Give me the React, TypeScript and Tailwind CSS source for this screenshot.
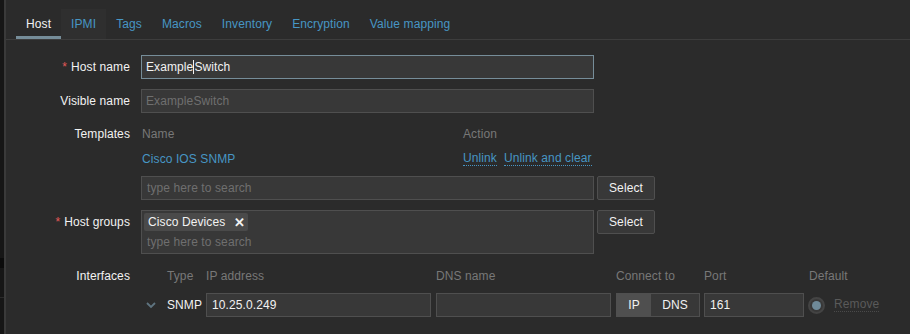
import React from 'react'

const tabs = ['Host', 'IPMI', 'Tags', 'Macros', 'Inventory', 'Encryption', 'Value mapping']

function Label({ text, required }: { text: string; required?: boolean }) {
    return (
        <div className="w-[124px] shrink-0 text-right text-[#f2f2f2] leading-[24px]">
            {required && <span className="text-[#e45959] mr-[4px]">*</span>}
            {text}
        </div>
    )
}

function SelectButton() {
    return (
        <div className="h-[24px] w-[58px] ml-[3px] bg-[#383838] border border-[#4f4f4f] rounded-[2px] text-[#f2f2f2] flex items-center justify-center">
            Select
        </div>
    )
}

export default function App() {
    return (
        <div className="w-[910px] h-[334px] bg-[#2b2b2b] flex overflow-hidden text-[12px] tracking-[0.1px] font-['Liberation_Sans',Arial,sans-serif]">
            <div className="w-[5px] shrink-0 bg-[#161616] border-r border-[#3a3a3a] flex flex-col">
                <div className="h-[258px]" />
                <div className="h-[10px] bg-[#0b0b0b]" />
                <div className="h-[29px]" />
                <div className="h-px bg-[#2a2a2a]" />
            </div>
            <div className="flex-1 border-l border-[#3a3a3a]">
                <div className="pt-[9px] pl-[10px] border-b border-[#3d3d3d] flex">
                    {tabs.map((t, i) => (
                        <div
                            key={t}
                            className={
                                i === 0
                                    ? 'h-[30px] px-[10px] flex items-center text-[#f2f2f2] border-b-[3px] border-[#768d99] pt-[3px]'
                                    : i === 1
                                    ? 'h-[30px] px-[10px] flex items-center text-[#4796c4] bg-[#2f2f2f] border-b-[3px] border-transparent pt-[3px]'
                                    : 'h-[30px] px-[10px] flex items-center text-[#4796c4] border-b-[3px] border-transparent pt-[3px]'
                            }
                        >
                            {t}
                        </div>
                    ))}
                </div>

                <div className="pt-[15px] flex flex-col">
                    <div className="flex">
                        <Label text="Host name" required />
                        <div className="ml-[11px] w-[453px] h-[24px] bg-[#383838] border border-[#768d99] flex items-center px-[4px] text-[#f2f2f2]">
                            Example<span className="inline-block w-px h-[14px] bg-[#f2f2f2]" />Switch
                        </div>
                    </div>

                    <div className="flex mt-[10px]">
                        <Label text="Visible name" />
                        <div className="ml-[11px] w-[453px] h-[24px] bg-[#383838] border border-[#4f4f4f] flex items-center px-[4px] text-[#6f6f6f]">
                            ExampleSwitch
                        </div>
                    </div>

                    <div className="flex mt-[10px]">
                        <div className="flex flex-col">
                            <div className="mt-[-1px]"><Label text="Templates" /></div>
                        </div>
                        <div className="ml-[11px] flex flex-col">
                            <div className="w-[453px] flex h-[22px] items-center text-[#787878]">
                                <div className="w-[322px] pl-px">Name</div>
                                <div>Action</div>
                            </div>
                            <div className="w-[453px] flex h-[24px] items-center pt-[3px]">
                                <div className="w-[322px] pl-px text-[#4796c4]">Cisco IOS SNMP</div>
                                <div className="flex gap-[7px]">
                                    <span className="text-[#4796c4] border-b border-dotted border-[#4796c4] leading-[13px]">Unlink</span>
                                    <span className="text-[#4796c4] border-b border-dotted border-[#4796c4] leading-[13px]">Unlink and clear</span>
                                </div>
                            </div>
                            <div className="flex mt-[7px]">
                                <div className="w-[453px] h-[24px] bg-[#383838] border border-[#4f4f4f] flex items-center px-[5px] text-[#6f6f6f]">
                                    type here to search
                                </div>
                                <SelectButton />
                            </div>
                        </div>
                    </div>

                    <div className="flex mt-[10px]">
                        <Label text="Host groups" required />
                        <div className="ml-[11px] flex">
                            <div className="w-[453px] h-[44px] bg-[#383838] border border-[#4f4f4f] px-[2px] pt-[2px] flex flex-col">
                                <div className="h-[18px] w-[104px] bg-[#4a4a4a] rounded-[2px] flex items-center pl-[4px] gap-[9px] text-[#f2f2f2]">
                                    Cisco Devices
                                    <span className="font-bold text-[13px] leading-none">✕</span>
                                </div>
                                <div className="pl-[3px] mt-[2px] text-[#6f6f6f]">type here to search</div>
                            </div>
                            <SelectButton />
                        </div>
                    </div>

                    <div className="flex mt-[10px]">
                        <div className="flex flex-col">
                            <Label text="Interfaces" />
                        </div>
                        <div className="ml-[11px] flex flex-col">
                            <div className="flex h-[24px] items-center text-[#787878]">
                                <div className="w-[26px]" />
                                <div className="w-[39px]">Type</div>
                                <div className="w-[230px]">IP address</div>
                                <div className="w-[180px]">DNS name</div>
                                <div className="w-[88px]">Connect to</div>
                                <div className="w-[105px]">Port</div>
                                <div>Default</div>
                            </div>
                            <div className="flex h-[24px] items-center mt-[5px]">
                                <div className="w-[26px] pl-[5px]">
                                    <svg width="10" height="7" viewBox="0 0 10 7" fill="none">
                                        <path d="M1 1l4 4 4-4" stroke="#5f7480" strokeWidth="1.8" />
                                    </svg>
                                </div>
                                <div className="w-[39px] text-[#f2f2f2]">SNMP</div>
                                <div className="w-[225px] h-[24px] bg-[#383838] border border-[#4f4f4f] flex items-center px-[5px] text-[#f2f2f2] mr-[5px]">
                                    10.25.0.249
                                </div>
                                <div className="w-[175px] h-[24px] bg-[#383838] border border-[#4f4f4f] mr-[5px]" />
                                <div className="w-[84px] h-[24px] border border-[#4f4f4f] flex mr-[4px] text-[#f2f2f2]">
                                    <div className="w-[34px] bg-[#4f4f4f] flex items-center justify-center">IP</div>
                                    <div className="flex-1 bg-[#383838] flex items-center justify-center">DNS</div>
                                </div>
                                <div className="w-[100px] h-[24px] bg-[#383838] border border-[#4f4f4f] flex items-center px-[5px] text-[#f2f2f2] mr-[4px]">
                                    161
                                </div>
                                <div className="w-[17px] h-[17px] rounded-full bg-[#383838] border-2 border-[#444444] flex items-center justify-center">
                                    <div className="w-[9px] h-[9px] rounded-full bg-[#6f8a99]" />
                                </div>
                                <span className="ml-[9px] text-[#5a5a5a] border-b border-dotted border-[#4a4a4a] leading-[13px]">Remove</span>
                            </div>
                        </div>
                    </div>
                </div>
            </div>
        </div>
    )
}
